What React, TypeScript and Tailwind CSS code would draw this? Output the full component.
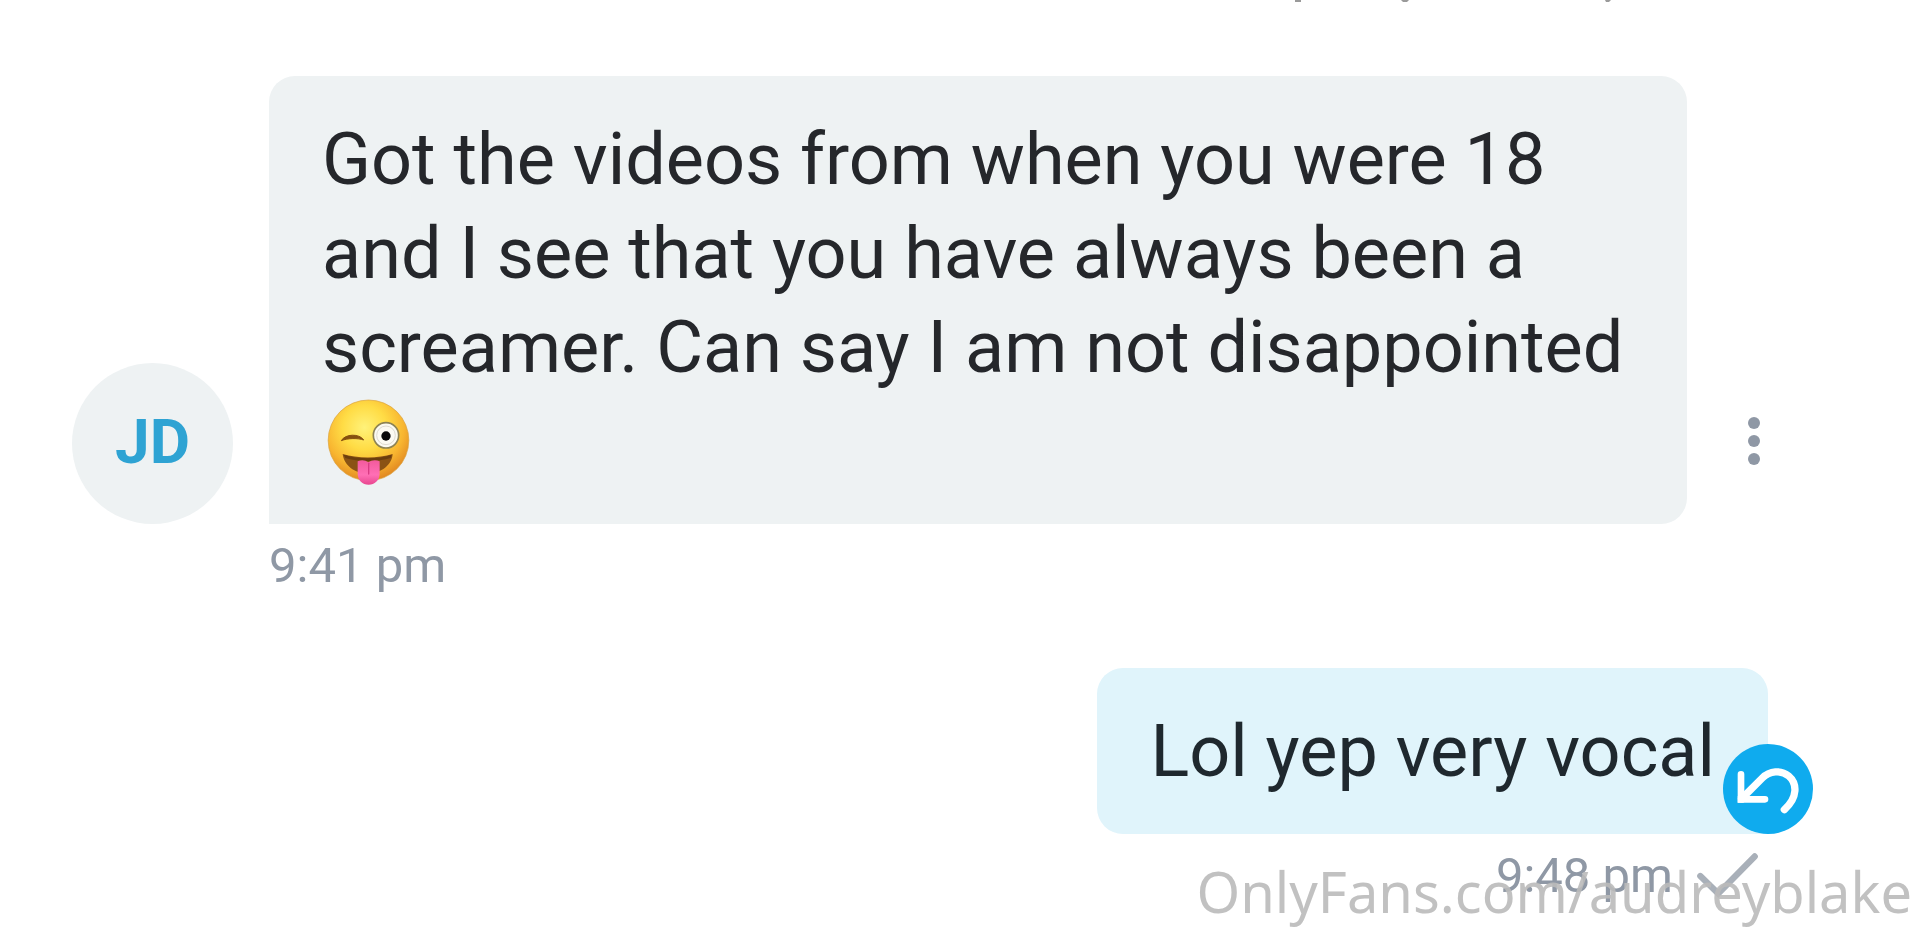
import type { ReactNode } from "react";

function WinkingFace() {
  return (
    <svg
      role="img"
      aria-label="Winking face with tongue"
      viewBox="39 36 279 264"
      className="h-[88px] w-[93px]"
    >
      <defs>
        <radialGradient id="face" cx="0.45" cy="0.34" r="0.68">
          <stop offset="0" stopColor="#fff27a" />
          <stop offset="0.4" stopColor="#ffdc45" />
          <stop offset="0.72" stopColor="#f8b530" />
          <stop offset="1" stopColor="#df8420" />
        </radialGradient>
        <linearGradient id="tongue" x1="0" y1="0" x2="0" y2="1">
          <stop offset="0" stopColor="#f25a9c" />
          <stop offset="0.6" stopColor="#ff6fb5" />
          <stop offset="1" stopColor="#e8468f" />
        </linearGradient>
      </defs>
      <circle cx="178.500" cy="163" r="121" fill="url(#face)" stroke="#d9a03a" strokeWidth="2" />
      <path d="M97 164 C108 143 152 142 164 162 C148 156 116 156 97 164 Z" fill="#86500f" stroke="#86500f" strokeWidth="3" strokeLinejoin="round" />
      <circle cx="231" cy="148" r="38" fill="#fbfaf2" stroke="#8d8354" strokeWidth="5" />
      <circle cx="231" cy="148" r="28" fill="none" stroke="#dedbd0" strokeWidth="3" />
      <circle cx="231" cy="150" r="14" fill="#080808" />
      <path d="M101 204 C145 218 208 218 251 204 C249 236 218 262 177 262 C136 262 105 238 101 204 Z" fill="#8a5214" />
      <path d="M104 206 C146 220 207 220 248 206 L245 216 C208 228 145 228 109 216 Z" fill="#6b3d0e" />
      <path d="M146 226 C158 220 169 222 178 229 C187 222 200 220 212 226 L212 264 C211 284 197 296 179 296 C160 296 147 284 146 264 Z" fill="url(#tongue)" />
      <path d="M179 232 L179 264" stroke="#d83b83" strokeWidth="4" strokeLinecap="round" />
    </svg>
  );
}

function UndoIcon() {
  return (
    <svg viewBox="128 72 270 270" className="size-full" fill="none" stroke="#fff" aria-hidden="true">
      <path d="M182 163 V238 H254" strokeWidth="20" strokeLinecap="round" />
      <path d="M172 228 V248 H192 Z" fill="#fff" stroke="none" />
      <path
        d="M184 236 L246 174 C268 152 302 149 325 168 C351 190 353 233 312 269"
        strokeWidth="22"
        strokeLinecap="round"
      />
    </svg>
  );
}

function SentIcon() {
  return (
    <svg
      role="img"
      aria-label="Sent"
      viewBox="50 400 184 138"
      className="h-[46px] w-[61px]"
      fill="none"
      stroke="#a9b0b9"
      strokeWidth="19"
      strokeLinecap="round"
    >
      <path d="M60 469 L114 522 L224 410" />
    </svg>
  );
}

function ClippedDescenders() {
  return (
    <svg viewBox="0 0 320 2" className="h-[2px] w-[320px]" fill="#9a9a9a" aria-hidden="true">
      <rect x="0" y="0" width="6" height="2" />
      <path d="M106 0 H114 L112 2 H108 Z" />
      <path d="M310 0 H316 L314 2 H311 Z" />
    </svg>
  );
}

function Bubble({ className, children }: { className: string; children: ReactNode }) {
  return (
    <div className={`px-[53px] pt-[37px] pb-[35px] text-[72px] leading-[94px] ${className}`}>{children}</div>
  );
}

export default function App() {
  return (
    <main className="relative flex min-h-screen flex-col overflow-hidden bg-white font-['Roboto','Liberation_Sans',sans-serif] text-[#25272b]">
      <header className="flex h-[76px] items-start justify-end pr-[305px]">
        <ClippedDescenders />
      </header>

      <article>
        <div className="flex items-end gap-9 pr-[136px] pl-[72px]">
          <div className="flex size-[161px] shrink-0 items-center justify-center rounded-full bg-[#eef2f3] pb-1 text-[62px] font-bold text-[#2ea3d3]">
            JD
          </div>
          <Bubble className="min-w-0 flex-1 rounded-[26px] rounded-bl-none bg-[#eef2f3]">
            <p>
              Got the videos from when you were 18 and I see that you have always been a screamer. Can
              say I am not disappointed{" "}
              <span className="inline-flex h-[94px] items-center align-top">
                <WinkingFace />
              </span>
            </p>
          </Bubble>
          <button
            type="button"
            aria-label="Message options"
            className="flex h-[166px] w-[61px] shrink-0 flex-col items-center justify-center gap-[6px]"
          >
            <span className="size-3 rounded-full bg-[#8f98a5]" />
            <span className="size-3 rounded-full bg-[#8f98a5]" />
            <span className="size-3 rounded-full bg-[#8f98a5]" />
          </button>
        </div>
        <time className="mt-3 block pl-[269px] text-[49px] leading-[60px] text-[#8f98a5]">9:41 pm</time>
      </article>

      <article className="mt-[72px] flex flex-col items-end pr-[152px]">
        <div className="relative">
          <Bubble className="rounded-[26px] rounded-br-none bg-[#e0f4fb] text-[#1f282e]">
            <p>Lol yep very vocal</p>
          </Bubble>
          <button
            type="button"
            aria-label="Undo"
            className="absolute -right-[45px] bottom-0 size-[90px] rounded-full bg-[#0fabee]"
          >
            <UndoIcon />
          </button>
        </div>
        <div className="mt-3 flex items-center gap-6 pr-[10px]">
          <time className="text-[49px] leading-[60px] text-[#8f98a5]">9:48 pm</time>
          <SentIcon />
        </div>
      </article>

      <a
        href="#profile"
        className="absolute right-2 bottom-2 font-['Noto_Sans','Open_Sans',sans-serif] text-[56px] leading-[76px] text-[#bababa]/90"
      >
        OnlyFans.com/audreyblake
      </a>
    </main>
  );
}
